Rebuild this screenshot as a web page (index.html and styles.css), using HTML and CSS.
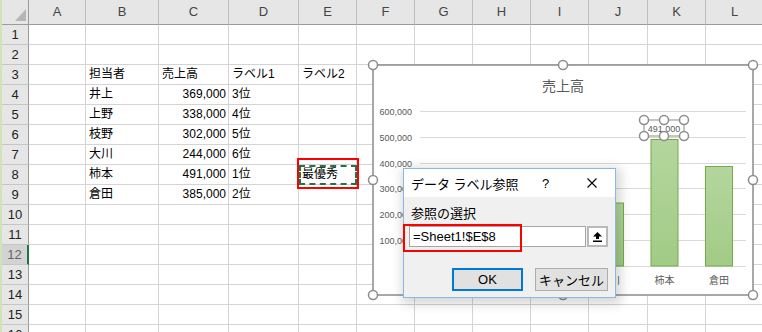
FILE: index.html
```html
<!DOCTYPE html>
<html lang="ja">
  <head>
    <meta charset="utf-8">
    <link rel="stylesheet" href="styles.css">
  </head>
  <body>
    <div class="app">
      <div class="sheet">
        <div class="corner"><span class="tri"></span></div><div class="ch">A</div><div class="ch">B</div><div class="ch">C</div><div class="ch">D</div><div class="ch">E</div><div class="ch">F</div><div class="ch">G</div><div class="ch">H</div><div class="ch">I</div><div class="ch">J</div><div class="ch">K</div><div class="ch">L</div>
        <div class="rh">1</div><div></div><div></div><div></div><div></div><div></div><div></div><div></div><div></div><div></div><div></div><div></div><div></div>
        <div class="rh">2</div><div></div><div></div><div></div><div></div><div></div><div></div><div></div><div></div><div></div><div></div><div></div><div></div>
        <div class="rh">3</div><div></div><div>担当者</div><div>売上高</div><div>ラベル1</div><div>ラベル2</div><div></div><div></div><div></div><div></div><div></div><div></div><div></div>
        <div class="rh">4</div><div></div><div>井上</div><div class="num">369,000</div><div>3位</div><div></div><div></div><div></div><div></div><div></div><div></div><div></div><div></div>
        <div class="rh">5</div><div></div><div>上野</div><div class="num">338,000</div><div>4位</div><div></div><div></div><div></div><div></div><div></div><div></div><div></div><div></div>
        <div class="rh">6</div><div></div><div>枝野</div><div class="num">302,000</div><div>5位</div><div></div><div></div><div></div><div></div><div></div><div></div><div></div><div></div>
        <div class="rh">7</div><div></div><div>大川</div><div class="num">244,000</div><div>6位</div><div></div><div></div><div></div><div></div><div></div><div></div><div></div><div></div>
        <div class="rh">8</div><div></div><div>柿本</div><div class="num">491,000</div><div>1位</div><div class="copied">最優秀</div><div></div><div></div><div></div><div></div><div></div><div></div><div></div>
        <div class="rh">9</div><div></div><div>倉田</div><div class="num">385,000</div><div>2位</div><div></div><div></div><div></div><div></div><div></div><div></div><div></div><div></div>
        <div class="rh">10</div><div></div><div></div><div></div><div></div><div></div><div></div><div></div><div></div><div></div><div></div><div></div><div></div>
        <div class="rh">11</div><div></div><div></div><div></div><div></div><div></div><div></div><div></div><div></div><div></div><div></div><div></div><div></div>
        <div class="rh active">12</div><div></div><div></div><div></div><div></div><div></div><div></div><div></div><div></div><div></div><div></div><div></div><div></div>
        <div class="rh">13</div><div></div><div></div><div></div><div></div><div></div><div></div><div></div><div></div><div></div><div></div><div></div><div></div>
        <div class="rh">14</div><div></div><div></div><div></div><div></div><div></div><div></div><div></div><div></div><div></div><div></div><div></div><div></div>
        <div class="rh">15</div><div></div><div></div><div></div><div></div><div></div><div></div><div></div><div></div><div></div><div></div><div></div><div></div>
        <div class="rh">16</div><div></div><div></div><div></div><div></div><div></div><div></div><div></div><div></div><div></div><div></div><div></div><div></div>
      </div>

      <!-- chart object floating over the sheet -->
      <div class="chart">
        <svg width="380" height="230" viewBox="0 0 380 230">
          <defs>
            <linearGradient id="barfill" x1="0" y1="0" x2="0" y2="1">
              <stop offset="0" stop-color="#b4d69e"/>
              <stop offset="1" stop-color="#a2cb86"/>
            </linearGradient>
          </defs>
          <rect x="0" y="0" width="380" height="230" fill="#fff" stroke="#8c8c8c" stroke-width="1.5"/>
          <text class="c-title" x="190" y="26" text-anchor="middle">売上高</text>

          <g stroke="#d9d9d9" stroke-width="1">
            <line x1="47" y1="46.5" x2="373" y2="46.5"/>
            <line x1="47" y1="72.5" x2="373" y2="72.5"/>
            <line x1="47" y1="98.5" x2="373" y2="98.5"/>
            <line x1="47" y1="123.5" x2="373" y2="123.5"/>
            <line x1="47" y1="149.5" x2="373" y2="149.5"/>
            <line x1="47" y1="175.5" x2="373" y2="175.5"/>
            <line x1="47" y1="201.5" x2="373" y2="201.5"/>
          </g>
          <!-- the "0" tick and the first category labels sit under the dialog -->
          <g class="c-axis" text-anchor="end">
            <text x="39" y="50">600,000</text>
            <text x="39" y="76">500,000</text>
            <text x="39" y="102">400,000</text>
            <text x="39" y="127">300,000</text>
            <text x="39" y="153">200,000</text>
            <text x="39" y="179">100,000</text>
          </g>

          <g fill="url(#barfill)" stroke="#70ad47" stroke-width="1">
            <rect x="60.5" y="105.5" width="27" height="95.5"/>
            <rect x="115" y="113.5" width="27" height="87.5"/>
            <rect x="169.5" y="123" width="27" height="78"/>
            <rect x="223.5" y="138" width="27" height="63"/>
            <rect x="278" y="74.5" width="27" height="126.5"/>
            <rect x="332.5" y="101.5" width="27" height="99.5"/>
          </g>

          <g class="c-cat" text-anchor="middle">
            <text x="237" y="219">大川</text>
            <text x="291.5" y="219">柿本</text>
            <text x="346" y="219">倉田</text>
          </g>

          <!-- selected data label -->
          <rect x="271" y="55" width="40" height="16" fill="none" stroke="#8c8c8c" stroke-width="1"/>
          <text class="c-axis" x="291" y="67" text-anchor="middle">491,000</text>
          <g fill="#fff" stroke="#8c8c8c" stroke-width="1.5">
            <circle cx="271" cy="55" r="4.5"/>
            <circle cx="291" cy="55" r="4.5"/>
            <circle cx="311" cy="55" r="4.5"/>
            <circle cx="271" cy="71" r="4.5"/>
            <circle cx="291" cy="71" r="4.5"/>
            <circle cx="311" cy="71" r="4.5"/>
          </g>

          <!-- chart area handles -->
          <g fill="#fff" stroke="#8c8c8c" stroke-width="1.5">
            <circle cx="0" cy="0" r="4.5"/>
            <circle cx="190" cy="0" r="4.5"/>
            <circle cx="380" cy="0" r="4.5"/>
            <circle cx="0" cy="115" r="4.5"/>
            <circle cx="380" cy="115" r="4.5"/>
            <circle cx="0" cy="230" r="4.5"/>
            <circle cx="190" cy="230" r="4.5"/>
            <circle cx="380" cy="230" r="4.5"/>
          </g>
        </svg>
      </div>

      <!-- データ ラベル参照 dialog -->
      <div class="dialog">
        <div class="dlg-title">
          <span class="dlg-name">データ ラベル参照</span>
          <span class="dlg-help">?</span>
          <span class="dlg-close">
            <svg width="10" height="10" viewBox="0 0 10 10"><path d="M0.5 0.5L9.5 9.5M9.5 0.5L0.5 9.5" stroke="#000" stroke-width="1.1"/></svg>
          </span>
        </div>
        <div class="dlg-body">
          <div class="dlg-label">参照の選択</div>
          <div class="ref-row">
            <div class="ref-input">=Sheet1!$E$8</div>
            <div class="ref-btn">
              <svg width="9" height="10" viewBox="0 0 9 10"><path d="M4.5 0L9 4.5H6V7H3V4.5H0Z" fill="#000"/><rect x="0" y="8.5" width="9" height="1.5" fill="#000"/></svg>
            </div>
          </div>
          <div class="dlg-buttons">
            <button class="btn btn-ok">OK</button>
            <button class="btn">キャンセル</button>
          </div>
        </div>
        <div class="mark"></div>
      </div>
    </div>
  </body>
</html>
```

FILE: styles.css
```css
html, body {
  margin: 0;
  overflow: hidden;
  background: #fff;
}

body {
  font-family: "Liberation Sans", "Noto Sans CJK JP", sans-serif;
  color: #000;
}

.app {
  position: relative;
  width: 762px;
  height: 332px;
  overflow: hidden;
  border-left: 2px solid #cfe3b4;
  box-sizing: border-box;
}

.sheet {
  display: grid;
  grid-template-columns: 27px 57px 73px 70px 70px 58px 58px 58px 58px 58px 59px 58px 58px;
  grid-template-rows: 25px;
  grid-auto-rows: 20px;
  width: 762px;
}

.sheet > div {
  box-sizing: border-box;
  border-right: 1px solid #d4d4d4;
  border-bottom: 1px solid #d4d4d4;
  font-size: 12px;
  line-height: 19px;
  padding: 0 3px;
  white-space: nowrap;
  overflow: hidden;
}

.sheet > .num {
  text-align: right;
  padding-right: 2px;
}

.sheet > .ch {
  background: #e6e6e6;
  border-right-color: #bdbdbd;
  border-bottom-color: #9b9b9b;
  color: #444;
  font-size: 13px;
  line-height: 24px;
  text-align: center;
}

.sheet > .corner {
  background: #e6e6e6;
  border-right-color: #9b9b9b;
  border-bottom-color: #9b9b9b;
  display: flex;
  justify-content: flex-end;
  align-items: flex-end;
  padding: 0 2px 3px 0;
}

.tri {
  width: 0;
  height: 0;
  border-left: 11px solid transparent;
  border-bottom: 12px solid #b6b6b6;
}

.sheet > .rh {
  background: #e6e6e6;
  border-right-color: #9b9b9b;
  border-bottom-color: #c6c6c6;
  color: #222;
  font-size: 13px;
  text-align: center;
  padding: 0;
}

.sheet > .rh.active {
  background: #d3d3d3;
  color: #666;
  border-right: 2px solid #217346;
}

.sheet > .copied {
  position: relative;
  overflow: visible;
  outline: 2px dashed #217346;
  outline-offset: -2px;
  padding-left: 3px;
}

.copied::after {
  content: "";
  position: absolute;
  left: -2px;
  top: -7px;
  width: 62px;
  height: 31px;
  border: 2px solid #ff0000;
  box-sizing: border-box;
}

.chart {
  position: absolute;
  left: 371px;
  top: 65px;
  width: 380px;
  height: 230px;
}

.chart svg {
  display: block;
  overflow: visible;
}

.c-title {
  font-size: 14px;
  fill: #595959;
  font-family: "Noto Sans CJK JP", sans-serif;
}

.c-axis {
  font-size: 9px;
  fill: #595959;
}

.c-cat {
  font-size: 10px;
  fill: #595959;
  font-family: "Noto Sans CJK JP", sans-serif;
}

.dialog {
  position: absolute;
  left: 401px;
  top: 168px;
  width: 213px;
  height: 130px;
  box-sizing: border-box;
  border: 1px solid #86b9e8;
  background: #f0f0f0;
  box-shadow: 2px 3px 10px 3px rgba(0, 0, 0, 0.16);
  font-size: 13px;
}

.dlg-title {
  height: 28px;
  background: #fff;
  display: flex;
  align-items: center;
  padding-left: 7px;
}

.dlg-name {
  flex: 1;
}

.dlg-help {
  width: 10px;
  margin-right: 35px;
}

.dlg-close {
  display: flex;
  margin-right: 18px;
}

.dlg-body {
  padding: 9px 7px 0 5px;
}

.dlg-label {
  line-height: 16px;
  padding-left: 2px;
}

.ref-row {
  display: flex;
  margin-top: 4px;
  height: 21px;
}

.ref-input {
  width: 178px;
  box-sizing: border-box;
  border: 1px solid #a5a5a5;
  background: #fff;
  padding-left: 3px;
  line-height: 19px;
  font-size: 13px;
}

.ref-btn {
  width: 21px;
  margin-left: 1px;
  box-sizing: border-box;
  border: 2px solid #b9b9b9;
  background: #fff;
  display: flex;
  align-items: center;
  justify-content: center;
}

.dlg-buttons {
  display: flex;
  justify-content: flex-end;
  gap: 12px;
  margin-top: 21px;
}

.btn {
  height: 23px;
  width: 73px;
  border: 1px solid #adadad;
  background: #e1e1e1;
  font-family: "Liberation Sans", "Noto Sans CJK JP", sans-serif;
  font-size: 13px;
  padding: 0;
}

.btn-ok {
  width: 71px;
  border: 2px solid #0078d7;
}

.mark {
  position: absolute;
  left: -1px;
  top: 55px;
  width: 119px;
  height: 28px;
  border: 2px solid #ff0000;
  box-sizing: border-box;
}
```
